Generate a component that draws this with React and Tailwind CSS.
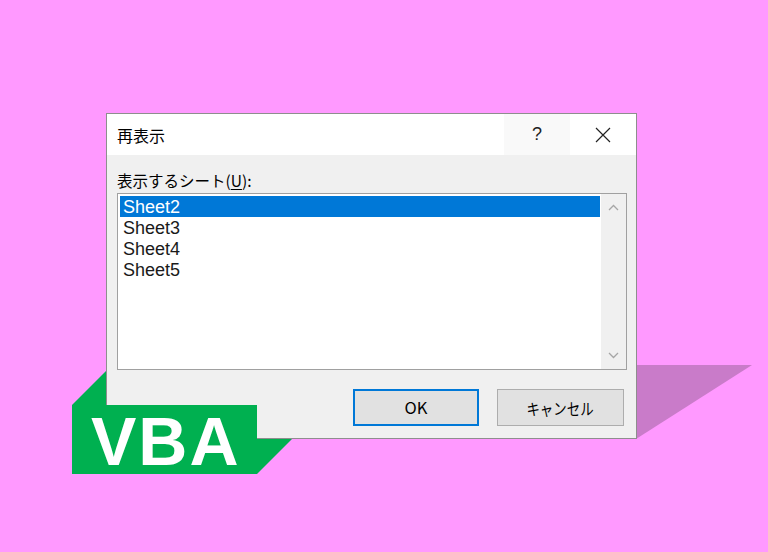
import React from 'react';

const font = { fontFamily: '"Noto Sans CJK JP", "Noto Sans", sans-serif' };
const latin = { fontFamily: '"Liberation Sans", Arial, sans-serif' };

const sheets = ['Sheet2', 'Sheet3', 'Sheet4', 'Sheet5'];

export default function App() {
  return (
    <div className="relative w-[768px] h-[552px] bg-[#ff99ff] overflow-hidden pt-[113px] pl-[106px]" style={font}>
      {/* long shadows behind the dialog */}
      <svg className="absolute left-0 top-0" width="768" height="552">
        <polygon points="630,365 752,365 636,439 630,439" fill="#c97bc9" />
        <polygon points="72,405 107,370 292,370 292,439 257,474 72,474" fill="#00b050" />
      </svg>

      {/* dialog */}
      <div className="relative w-[531px] h-[326px] border border-[#8e8e8e] bg-[#f0f0f0] flex flex-col">
        <div className="h-[41px] bg-white flex items-center">
          <div className="pl-[10px] text-[16px] text-black flex-1">再表示</div>
          <div className="w-[66px] h-full bg-[#f9f9f9] flex items-center justify-center text-[18px] text-[#222]" style={latin}>?</div>
          <div className="w-[66px] h-full flex items-center justify-center">
            <svg width="16" height="16" viewBox="0 0 16 16">
              <path d="M1 1L15 15M15 1L1 15" stroke="#222" strokeWidth="1.2" />
            </svg>
          </div>
        </div>

        <div className="pl-[10px] pt-[15px] flex flex-col">
          <div className="h-[20px] leading-[20px] text-[15.5px] text-black">
            表示するシート(<span className="underline underline-offset-2">U</span>):
          </div>
          <div className="mt-[3px] w-[510px] h-[177px] border border-[#a0a0a0] bg-white flex">
            <div className="flex-1 pl-[2px] pt-[2px] pr-[1px]" style={latin}>
              {sheets.map((s, i) => (
                <div
                  key={s}
                  className={`h-[21px] leading-[19px] pt-[2px] pl-[3px] text-[18px] ${i === 0 ? 'bg-[#0078d7] text-white' : 'text-[#1a1a1a]'}`}
                >
                  {s}
                </div>
              ))}
            </div>
            <div className="w-[25px] bg-[#f0f0f0] flex flex-col items-center justify-between py-[10px]">
              <svg width="11" height="7" viewBox="0 0 11 7">
                <path d="M1 6L5.5 1.5L10 6" fill="none" stroke="#a6a6a6" strokeWidth="1.3" />
              </svg>
              <svg width="11" height="7" viewBox="0 0 11 7">
                <path d="M1 1L5.5 5.5L10 1" fill="none" stroke="#a6a6a6" strokeWidth="1.3" />
              </svg>
            </div>
          </div>

          <div className="mt-[19px] flex justify-end gap-[18px] pr-[3px] w-[510px]">
            <button className="w-[126px] h-[37px] bg-[#e1e1e1] border-2 border-[#0078d7] text-[16.5px] text-black">OK</button>
            <button className="w-[127px] h-[37px] bg-[#e1e1e1] border border-[#adadad] text-[16px] text-black flex items-center justify-center">
              <span className="inline-block scale-x-[0.84]">キャンセル</span>
            </button>
          </div>
        </div>
      </div>

      {/* VBA badge over the dialog corner */}
      <div
        className="absolute left-[72px] top-[405px] w-[185px] h-[69px] bg-[#00b050] flex items-center pl-[19px] pt-[3px] text-white font-bold text-[68px] tracking-[2px] leading-none"
        style={latin}
      >
        VBA
      </div>
    </div>
  );
}
